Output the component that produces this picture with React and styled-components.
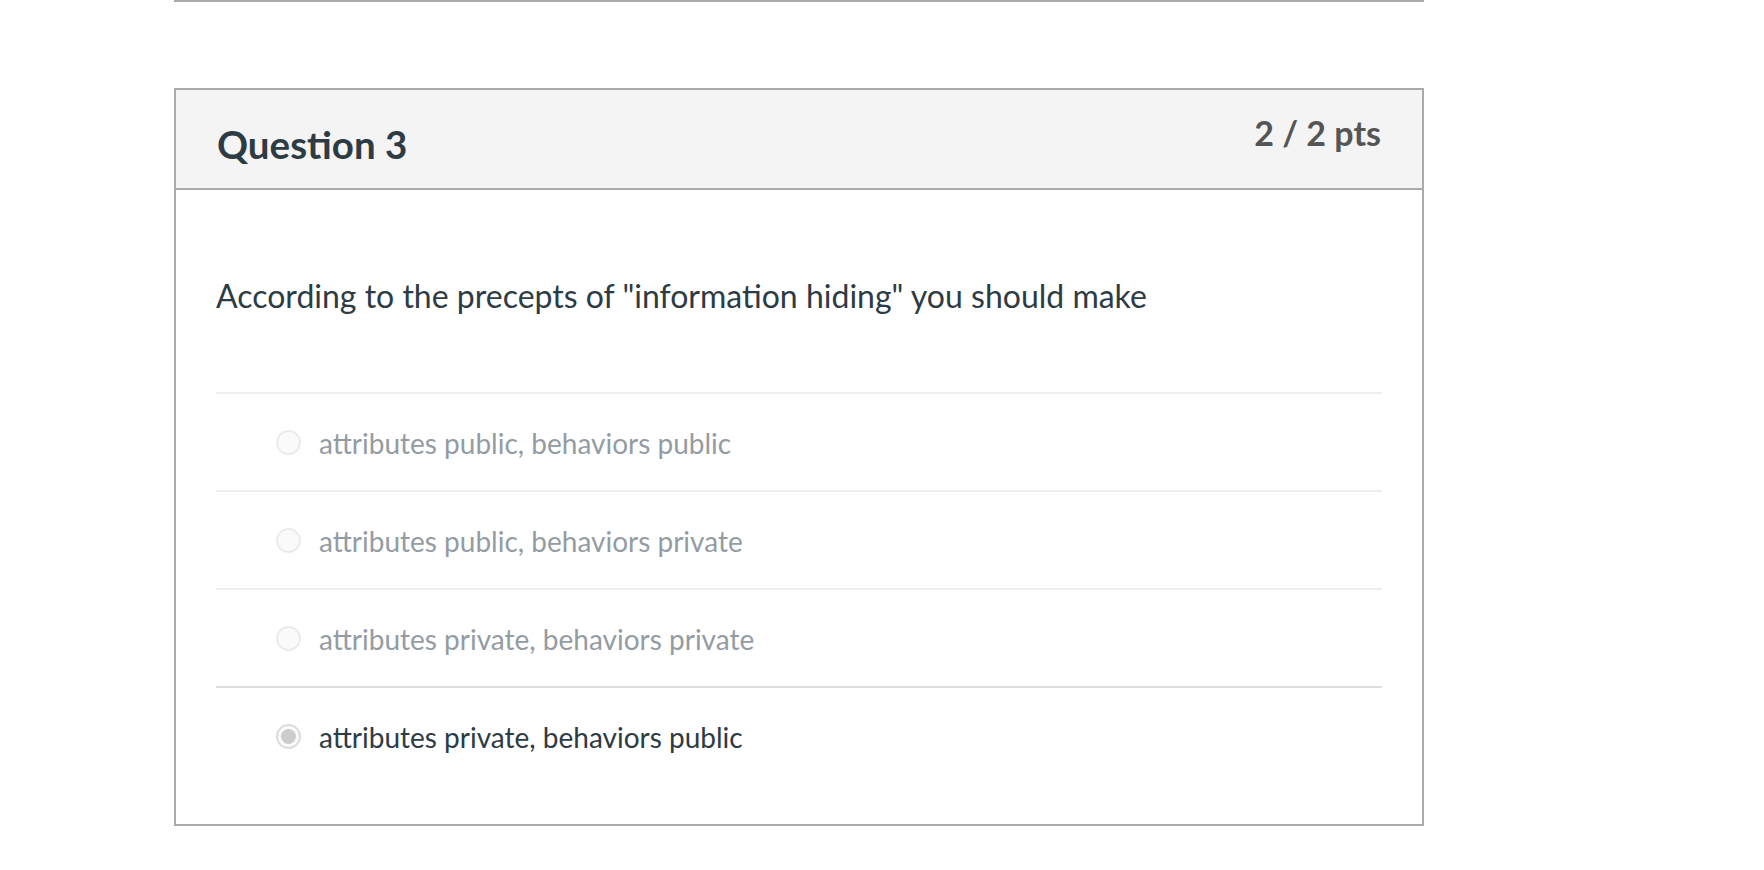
import React from 'react'
import styled, { createGlobalStyle } from 'styled-components'

const GlobalStyle = createGlobalStyle`
  body {
    margin: 0;
    background: #ffffff;
    font-family: Lato, "Open Sans", "Liberation Sans", sans-serif;
  }
`

const Page = styled.div`
  width: 1250px;
  margin-left: 174px;
`

const PrevCardEdge = styled.div`
  border-bottom: 2px solid #aaaaaa;
`

const Card = styled.section`
  margin-top: 86px;
  border: 2px solid #aaaaaa;
  background: #ffffff;
`

const Header = styled.header`
  box-sizing: border-box;
  height: 100px;
  padding: 23px 41px 0 41px;
  display: flex;
  justify-content: space-between;
  align-items: flex-start;
  background: #f4f4f4;
  border-bottom: 2px solid #aaaaaa;
`

const Title = styled.h2`
  margin: 8px 0 0 0;
  font-size: 38.5px;
  line-height: 1.2;
  font-weight: 700;
  color: #2d3b45;
`

const Points = styled.div`
  font-size: 34px;
  line-height: 1.2;
  font-weight: 700;
  color: #555555;
`

const Body = styled.div`
  padding: 87px 40px 40px 40px;
`

const Prompt = styled.p`
  margin: 0 0 77px 0;
  font-size: 32px;
  line-height: 1.2;
  color: #2d3b45;
`

const Answers = styled.div`
  display: flex;
  flex-direction: column;
`

const AnswerRow = styled.label`
  display: flex;
  align-items: center;
  height: 96px;
  padding-left: 60px;
  border-top: 2px solid ${(p) => (p.$selected ? '#dddddd' : '#eeeeee')};
`

const Radio = styled.span`
  box-sizing: border-box;
  width: 25px;
  height: 25px;
  border-radius: 50%;
  border: 2px solid ${(p) => (p.$checked ? '#dcdcdc' : '#ebebeb')};
  background: #fafafa;
  display: flex;
  align-items: center;
  justify-content: center;
  flex-shrink: 0;

  &::after {
    content: '';
    display: ${(p) => (p.$checked ? 'block' : 'none')};
    width: 15px;
    height: 15px;
    border-radius: 50%;
    background: #cccccc;
  }
`

const AnswerText = styled.span`
  margin: 2px 0 0 18px;
  font-size: 28px;
  line-height: 1.2;
  color: ${(p) => (p.$selected ? '#2d3b45' : '#949ca3')};
`

const answers = [
  { text: 'attributes public, behaviors public', selected: false },
  { text: 'attributes public, behaviors private', selected: false },
  { text: 'attributes private, behaviors private', selected: false },
  { text: 'attributes private, behaviors public', selected: true },
]

export default function App() {
  return (
    <>
      <GlobalStyle />
      <Page>
        <PrevCardEdge />
        <Card>
          <Header>
            <Title>Question 3</Title>
            <Points>2 / 2 pts</Points>
          </Header>
          <Body>
            <Prompt>According to the precepts of "information hiding" you should make</Prompt>
            <Answers>
              {answers.map((a) => (
                <AnswerRow key={a.text} $selected={a.selected}>
                  <Radio $checked={a.selected} />
                  <AnswerText $selected={a.selected}>{a.text}</AnswerText>
                </AnswerRow>
              ))}
            </Answers>
          </Body>
        </Card>
      </Page>
    </>
  )
}
